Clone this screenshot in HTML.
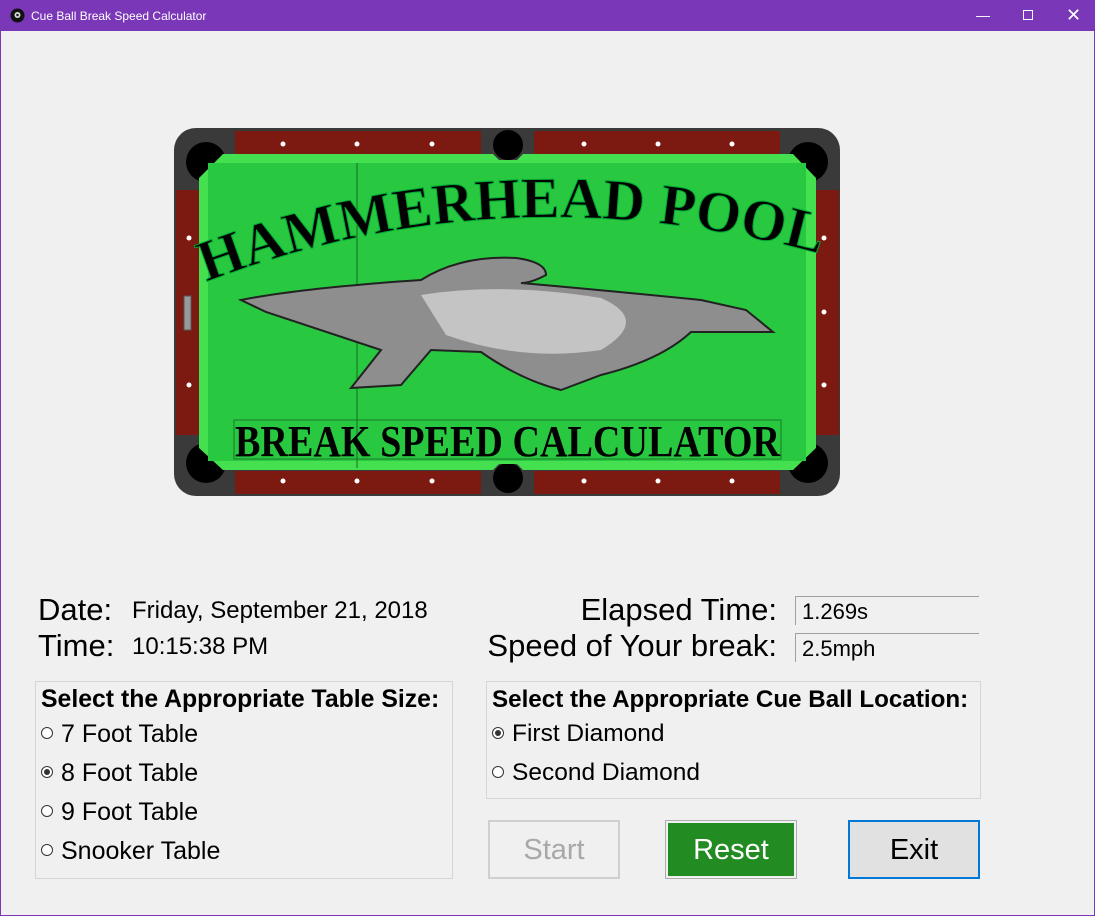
<!DOCTYPE html>
<html><head><meta charset="utf-8"><style>
*{margin:0;padding:0;box-sizing:border-box}
body{width:1095px;height:916px;background:#f0f0f0;font-family:"Liberation Sans",Arial,sans-serif;position:relative;overflow:hidden;border:1px solid #7b38b6;border-top:none}
.t{position:absolute;line-height:1;white-space:nowrap;color:#000}
#tb{position:absolute;left:0;top:0;width:1095px;height:31px;background:#7a37b7;color:#fff;font-size:12px}
.grp{position:absolute;border:1px solid #d5d5d5}
.rb{position:absolute;width:12px;height:12px;border:1px solid #333;border-radius:50%;background:#fff}
.rb.on::after{content:"";position:absolute;left:2px;top:2px;width:6px;height:6px;border-radius:50%;background:#333}
.btn{position:absolute;top:820px;width:132px;height:59px;font-size:29px;display:flex;align-items:center;justify-content:center;padding-top:2px}
.tx{position:absolute;width:184px;height:29px;border-top:1px solid #a0a0a0;border-left:1px solid #a0a0a0;font-size:22px;padding-left:6px;line-height:30px}
</style></head><body>
<div id="tb">
<svg style="position:absolute;left:9px;top:8px" width="15" height="15"><circle cx="7.5" cy="7.5" r="7" fill="#111"/><circle cx="7.5" cy="7" r="3" fill="#ddd"/><circle cx="7.5" cy="7" r="1.3" fill="#222"/></svg>
<div class="t" style="left:30px;top:10px;font-size:12px;color:#fff">Cue Ball Break Speed Calculator</div>
<div class="t" style="left:975px;top:8px;font-size:14px;color:#fff">&#8212;</div>
<div style="position:absolute;left:1022px;top:10px;width:10px;height:10px;border:1px solid #fff"></div>
<div class="t" style="left:1065px;top:6px;font-size:18px;color:#fff">&#10005;</div>
</div>

<svg style="position:absolute;left:0;top:0" width="1095" height="916">
<rect x="173" y="128" width="666" height="368" rx="22" fill="#3a3a3a"/>
<rect x="234" y="131" width="246" height="23" fill="#7c1a12"/>
<rect x="533" y="131" width="246" height="23" fill="#7c1a12"/>
<rect x="234" y="471" width="246" height="23" fill="#7c1a12"/>
<rect x="533" y="471" width="246" height="23" fill="#7c1a12"/>
<rect x="175" y="190" width="23" height="245" fill="#7c1a12"/>
<rect x="815" y="190" width="23" height="245" fill="#7c1a12"/>
<rect x="183" y="296" width="7" height="34" fill="#999" stroke="#555"/>
<g fill="#000"><circle cx="205" cy="162" r="20"/><circle cx="807" cy="162" r="20"/><circle cx="205" cy="463" r="20"/><circle cx="807" cy="463" r="20"/><circle cx="507" cy="145" r="15"/><circle cx="507" cy="478" r="15"/></g>
<g fill="#fff"><circle cx="282" cy="144" r="2.5"/><circle cx="356" cy="144" r="2.5"/><circle cx="431" cy="144" r="2.5"/><circle cx="583" cy="144" r="2.5"/><circle cx="657" cy="144" r="2.5"/><circle cx="731" cy="144" r="2.5"/>
<circle cx="282" cy="481" r="2.5"/><circle cx="356" cy="481" r="2.5"/><circle cx="431" cy="481" r="2.5"/><circle cx="583" cy="481" r="2.5"/><circle cx="657" cy="481" r="2.5"/><circle cx="731" cy="481" r="2.5"/>
<circle cx="188" cy="238" r="2.5"/><circle cx="188" cy="385" r="2.5"/><circle cx="823" cy="238" r="2.5"/><circle cx="823" cy="312" r="2.5"/><circle cx="823" cy="385" r="2.5"/></g>
<path d="M222 154 H492 L498 160 H516 L522 154 H792 L815 178 V448 L792 470 H522 L516 464 H498 L492 470 H222 L198 448 V178 Z" fill="#44e050"/>
<rect x="207" y="163" width="598" height="298" fill="#28c840"/>
<line x1="356" y1="163" x2="356" y2="468" stroke="#1a6a25" stroke-width="1"/>
<defs><path id="arc" d="M205 282 Q500 170 812 252"/></defs>
<text font-family="Liberation Serif,serif" font-size="58" font-weight="bold" fill="#000" stroke="#0a3" stroke-width="1"><textPath href="#arc" textLength="625" lengthAdjust="spacingAndGlyphs">HAMMERHEAD POOL</textPath></text>
<path d="M240 300 Q300 288 420 280 Q460 255 515 258 Q545 262 545 275 Q530 283 520 283 Q600 290 700 300 L745 310 L772 332 L690 332 Q660 360 600 375 L560 390 Q520 380 480 352 L430 350 L400 385 L350 388 L380 350 L265 312 Z" fill="#8e8e8e" stroke="#222" stroke-width="2"/>
<path d="M420 295 Q500 282 600 298 Q650 320 600 350 Q520 362 445 335 Z" fill="#c4c4c4"/>
<rect x="233" y="420" width="547" height="39" fill="none" stroke="#1a7a2a"/>
<text x="234" y="456" font-family="Liberation Serif,serif" font-size="44" font-weight="bold" fill="#000" textLength="545" lengthAdjust="spacingAndGlyphs">BREAK SPEED CALCULATOR</text>
</svg>

<div class="t" style="left:37px;top:594px;font-size:31px">Date:</div>
<div class="t" style="left:131px;top:599px;font-size:24px">Friday, September 21, 2018</div>
<div class="t" style="left:37px;top:630px;font-size:31px">Time:</div>
<div class="t" style="left:131px;top:635px;font-size:24px">10:15:38 PM</div>
<div class="t" style="right:317px;top:594px;font-size:31px">Elapsed Time:</div>
<div class="t" style="right:317px;top:630px;font-size:31px">Speed of Your break:</div>
<div class="tx" style="left:794px;top:596px">1.269s</div>
<div class="tx" style="left:794px;top:633px">2.5mph</div>

<div class="grp" style="left:34px;top:681px;width:418px;height:198px"></div>
<div class="t" style="left:40px;top:688px;font-size:24.8px;font-weight:bold">Select the Appropriate Table Size:</div>
<div class="rb" style="left:40px;top:727px"></div><div class="t" style="left:60px;top:722px;font-size:25px">7 Foot Table</div>
<div class="rb on" style="left:40px;top:766px"></div><div class="t" style="left:60px;top:761px;font-size:25px">8 Foot Table</div>
<div class="rb" style="left:40px;top:805px"></div><div class="t" style="left:60px;top:800px;font-size:25px">9 Foot Table</div>
<div class="rb" style="left:40px;top:844px"></div><div class="t" style="left:60px;top:839px;font-size:25px">Snooker Table</div>

<div class="grp" style="left:485px;top:681px;width:495px;height:118px"></div>
<div class="t" style="left:491px;top:688px;font-size:24.2px;font-weight:bold">Select the Appropriate Cue Ball Location:</div>
<div class="rb on" style="left:491px;top:727px"></div><div class="t" style="left:511px;top:722px;font-size:24.5px">First Diamond</div>
<div class="rb" style="left:491px;top:766px"></div><div class="t" style="left:511px;top:761px;font-size:24.5px">Second Diamond</div>

<div class="btn" style="left:487px;border:2px solid #cfcfcf;color:#a8a8a8;background:#f0f0f0">Start</div>
<div class="btn" style="left:664px;border:1px solid #adadad;background:#228b22;color:#fff;box-shadow:inset 0 0 0 2px #f0f0f0">Reset</div>
<div class="btn" style="left:847px;border:2px solid #0078d7;background:#e1e1e1;color:#000">Exit</div>
</body></html>
